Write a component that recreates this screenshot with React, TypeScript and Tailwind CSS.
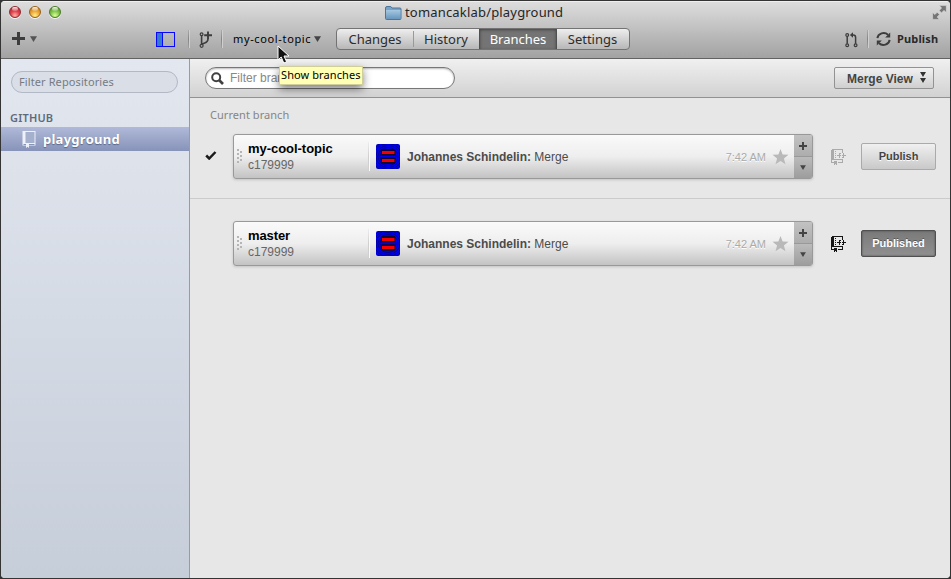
import React from "react";

const lucida = "font-['Noto_Sans','Open_Sans',sans-serif]";
const helv = "font-['Liberation_Sans',Arial,sans-serif]";

function Light({ color }: { color: "red" | "amber" | "green" }) {
  const bg = {
    red: "bg-[radial-gradient(circle_at_50%_85%,#ffb0a8_0%,#e0434b_45%,#a3202c_100%)] border-[#8c2a33]",
    amber: "bg-[radial-gradient(circle_at_50%_85%,#fff08a_0%,#eda637_45%,#b06a10_100%)] border-[#96611b]",
    green: "bg-[radial-gradient(circle_at_50%_85%,#d9ff9a_0%,#83c64a_45%,#417f1c_100%)] border-[#4a7a2b]",
  }[color];
  return (
    <div className={`relative h-3 w-3 rounded-full border shadow-[0_1px_0_#f5f5f5] ${bg}`}>
      <div className="absolute left-[2px] top-0 h-[4px] w-[6px] rounded-full bg-gradient-to-b from-white/90 to-white/20" />
    </div>
  );
}

function Divider() {
  return (
    <div className="flex h-[18px] w-[2px]">
      <div className="w-px bg-gradient-to-b from-[#aaa] via-[#858585] to-[#a0a0a0]" />
      <div className="w-px bg-[#cfcfcf]" />
    </div>
  );
}

function Triangle({ className = "" }: { className?: string }) {
  return (
    <svg className={className} width="7" height="6" viewBox="0 0 7 6">
      <path d="M0 .3h7L3.5 6z" fill="currentColor" />
    </svg>
  );
}

function BranchIcon() {
  return (
    <svg width="14" height="18" viewBox="0 0 14 18" fill="none" stroke="#3d3d3d" strokeWidth="1.6">
      <circle cx="2.6" cy="3.2" r="1.4" strokeWidth="1.2" />
      <circle cx="2.6" cy="14.8" r="1.5" strokeWidth="1.2" />
      <path d="M2.6 4.8v8.4M3.4 13.4c1-2.2 5.6-.8 5.6-5.4" />
      <path d="M9 .5v7.6M5.2 4.3h7.8" strokeWidth="1.9" />
    </svg>
  );
}

function PullIcon() {
  return (
    <svg width="13" height="16" viewBox="0 0 13 16" fill="none" stroke="#3d3d3d" strokeWidth="1.5">
      <circle cx="2.2" cy="3" r="1.4" strokeWidth="1.2" />
      <circle cx="2.2" cy="13.3" r="1.4" strokeWidth="1.2" />
      <circle cx="10.6" cy="13.3" r="1.4" strokeWidth="1.2" />
      <path d="M2.2 4.5v7.2M10.6 11.8V5.3c0-1.5-.8-2.3-2.3-2.3H7" />
      <path d="M8 .2v5.6L4.9 3z" fill="#3d3d3d" stroke="none" />
    </svg>
  );
}

function SyncIcon() {
  return (
    <svg width="15" height="16" viewBox="0 0 15 16" fill="none" stroke="#3d3d3d" strokeWidth="2">
      <path d="M1.4 7.2C2 2.4 8.3.3 12 3.7M13.6 8.8c-.6 4.8-6.9 6.900-10.6 3.500" />
      <path d="M14.2 1.400v5H9.200zM.8 14.600v-5h5z" fill="#3d3d3d" stroke="none" />
    </svg>
  );
}

function FolderIcon() {
  return (
    <svg width="17" height="14" viewBox="0 0 17 14">
      <defs>
        <linearGradient id="folder" x1="0" y1="0" x2="0" y2="1">
          <stop offset="0" stopColor="#a6c8e2" />
          <stop offset="1" stopColor="#6796bd" />
        </linearGradient>
      </defs>
      <path d="M.5 12.5V2Q.5.5 2 .5h3.8L7 2h8q1 0 1 1v9.500q0 1-1 1H1.500q-1 0-1-1z" fill="#76a3c8" stroke="#4e7496" />
      <path d="M1 4h14.500v9H1z" fill="url(#folder)" />
    </svg>
  );
}

function ExpandIcon() {
  return (
    <svg width="15" height="15" viewBox="0 0 15 15" fill="#757575">
      <path d="M7.300.6h7v7l-2.300-2.200-2.500 2.400-2.300-2.300 2.400-2.500zM.6 14.400v-7l2.300 2.200 2.300-2.300 2.300 2.300-2.400 2.500 2.500 2.300z" stroke="#dadada" strokeWidth=".6" />
    </svg>
  );
}

function RepoIcon() {
  return (
    <svg width="14" height="17" viewBox="0 0 14 17">
      <path d="M.5 0h13v14.500H7V17l-1.500-1.300L4 17v-2.500H.5z" fill="#eef1f8" />
      <path d="M3.500 1h9v11h-9z" fill="#a5b0ce" />
      <path d="M1.500 13.500H4M7 13.500h5.500" stroke="#8792b7" />
    </svg>
  );
}

function BookSyncIcon({ color }: { color: string }) {
  return (
    <svg width="15" height="17" viewBox="0 0 15 17" fill={color} shapeRendering="crispEdges">
      <path d="M0 1h1V0h11v4h-1V1H3v10H1v2h2v1H0zM3 10h9v4H7v-1h4v-2H3z" />
      <path d="M4 2h1v1H4zM4 4h1v1H4zM4 6h1v1H4zM4 8h1v1H4z" />
      <path d="M3 12h3v4H5v-1H4v1H3z" />
      <path d="M8 4h2v1H9v1h1v1H9v2H8V7H6V6h2zM12 4h1v2h2v1h-2v2h-2V8h1V7h-1V6h1z" />
    </svg>
  );
}

function Avatar() {
  return (
    <svg width="24" height="25" viewBox="0 0 24 25">
      <defs>
        <clipPath id="face"><rect width="24" height="25" rx="2" /></clipPath>
      </defs>
      <g clipPath="url(#face)">
        <rect width="24" height="25" fill="#0000f4" />
        {[7, 9, 11, 13, 15].map((r) => (
          <ellipse key={r} cx="12" cy="12.5" rx={r + 1} ry={r} fill="none" stroke="#000070" strokeWidth=".7" />
        ))}
        <rect x="4.800" y="5" width="14.400" height="6.500" rx="1" fill="#120030" />
        <rect x="4.800" y="13.300" width="14.400" height="6.400" rx="1" fill="#120030" />
        <rect x="6" y="7" width="12.500" height="3" fill="#f40000" />
        <rect x="6" y="15" width="12.500" height="3" fill="#f40000" />
      </g>
    </svg>
  );
}

function Grip() {
  return (
    <svg width="6" height="15" viewBox="0 0 6 15" fill="#b5b5b5" shapeRendering="crispEdges">
      {[0, 4, 8, 12].map((y) => <rect key={y} x="0" y={y} width="2" height="2" />)}
      {[2, 6, 10].map((y) => <rect key={y} x="3" y={y} width="2" height="2" />)}
    </svg>
  );
}

function BranchRow({ name, current, published }: { name: string; current?: boolean; published?: boolean }) {
  return (
    <div className="flex h-[45px] items-center">
      <div className="w-[43px] pb-[3px] pl-[15px]">
        {current && (
          <svg width="12" height="9" viewBox="0 0 12 9" fill="none">
            <path d="M1.200 4.500l3 3L10.500 1" stroke="#1b1b1b" strokeWidth="2.500" />
          </svg>
        )}
      </div>
      <div className={`flex h-[45px] w-[580px] overflow-hidden rounded-[3px] border border-[#999] bg-gradient-to-b from-[#fafafa] via-[#eee] to-[#c3c3c3] shadow-[0_1px_3px_rgba(0,0,0,.16)] ${helv}`}>
        <div className="flex w-[134px] items-center">
          <div className="w-[14px] pl-[3px]"><Grip /></div>
          <div className="pt-[1px]">
            <div className={`h-4 text-[13px] font-bold leading-4 text-black ${current ? "tracking-[-0.04px]" : "tracking-[-0.1px]"}`}>{name}</div>
            <div className="h-4 text-[12px] leading-4 text-[#666]">c179999</div>
          </div>
        </div>
        <div className="my-[7px] flex w-[2px]">
          <div className="w-px bg-gradient-to-b from-[#ededed] via-[#cfcfcf] to-[#d0d0d0]" />
          <div className="w-px bg-[#fafafa]" />
        </div>
        <div className="flex flex-1 items-center pl-[6px]">
          <Avatar />
          <div className="ml-[7px] whitespace-nowrap text-[12px] text-[#4b4b4b]">
            <b>Johannes Schindelin:</b> Merge
          </div>
          <div className="ml-auto mr-[6px] pt-px text-[11px] text-[#aaa] [text-shadow:0_1px_0_white]">7:42 AM</div>
          <svg className="mr-[5px]" width="17" height="16" viewBox="0 0 17 16">
            <path d="M8.500 0l2.100 5.500 5.900.3-4.600 3.700 1.600 5.800-5-3.300-5 3.300 1.600-5.800L.5 5.800l5.900-.3z" fill="#b9b9b9" />
          </svg>
        </div>
        <div className="flex w-[18px] flex-col bg-[#b6b6b6] text-[#444]">
          <div className="flex h-[22px] items-center justify-center border-b border-[#999] bg-gradient-to-b from-[#c2c2c2] to-[#adadad] pr-px pt-px">
            <svg width="8" height="8" viewBox="0 0 8 8"><path d="M4 0v8M0 4h8" stroke="currentColor" strokeWidth="2" /></svg>
          </div>
          <div className="flex flex-1 items-center justify-center bg-gradient-to-b from-[#bbb] to-[#9d9d9d] pr-px">
            <Triangle className="h-[5px] w-[6px]" />
          </div>
        </div>
      </div>
      <div className="ml-[18px] w-[30px] pt-px"><BookSyncIcon color={published ? "#151515" : "#aaa"} /></div>
      <button
        className={`h-[27px] w-[75px] rounded-[2px] border text-[11px] font-bold ${helv} ${
          published
            ? "border-[#505050] bg-gradient-to-b from-[#7a7a7a] to-[#909090] text-white shadow-[inset_0_0_2px_#444] [text-shadow:0_-1px_0_#555]"
            : "border-[#aaa] bg-gradient-to-b from-[#f0f0f0] to-[#c9c9c9] text-[#434343] [text-shadow:0_1px_0_white]"
        }`}
      >
        {published ? "Published" : "Publish"}
      </button>
    </div>
  );
}

export default function App() {
  return (
    <div className="h-[579px] w-[951px] bg-[#343434] p-px">
      <div className={`flex h-[577px] w-[949px] flex-col overflow-hidden rounded-[4px] bg-[#e7e7e7] ${lucida}`}>
        <header className="h-[58px] shrink-0 border-b border-t border-b-[#626262] border-t-[#efefef] bg-gradient-to-b from-[#dddddd] to-[#a2a2a2]">
          <div className="relative flex h-[22px] items-center pb-px pl-[384px]">
            <div className="absolute left-[8px] top-[4px] flex gap-[8px]">
              <Light color="red" /><Light color="amber" /><Light color="green" />
            </div>
            <FolderIcon />
            <span className="ml-[3px] pb-px text-[13px] leading-5 tracking-[0.18px] text-[#252525]">tomancaklab/playground</span>
            <div className="absolute right-[3px] top-[3px]"><ExpandIcon /></div>
          </div>
          <div className="flex h-[30px] items-center text-[#3d3d3d]">
            <svg className="-mt-px ml-[11px]" width="13" height="13" viewBox="0 0 13 13"><path d="M6.500 0v13M0 6.500h13" stroke="#3d3d3d" strokeWidth="3" /></svg>
            <Triangle className="-mt-px ml-[5px] text-[#555]" />
            <div className="ml-[119px] flex h-[15px] w-[19px] border border-[#0707ff]">
              <div className="w-[6px] border-r border-[#0707ff] bg-[#357ccc]" />
            </div>
            <div className="ml-[13px]"><Divider /></div>
            <div className="ml-[9px] pt-px"><BranchIcon /></div>
            <div className="ml-[8px]"><Divider /></div>
            <span className="ml-[10px] w-[79px] whitespace-nowrap text-[11px] tracking-[0.64px] text-black">my-cool-topic</span>
            <Triangle className="ml-[2px] text-[#444]" />
            <div className="ml-[15px] flex h-[22px] w-[294px] overflow-hidden rounded-[4px] border border-[#737373] bg-gradient-to-b from-[#eeeeee] to-[#b7b7b7] text-[13px] leading-5 text-[#2c2c2c]">
              <div className="w-[76px] text-center">Changes</div>
              <div className="my-[2px] w-px bg-[#999]" />
              <div className="w-[65px] pr-px text-center">History</div>
              <div className="w-[78px] border-x border-[#505050] bg-[#747474] text-center text-white shadow-[inset_0_1px_3px_#444]">Branches</div>
              <div className="flex-1 pr-px text-center">Settings</div>
            </div>
            <div className="ml-[215px] pt-px"><PullIcon /></div>
            <div className="ml-[9px]"><Divider /></div>
            <div className="ml-[7px]"><SyncIcon /></div>
            <span className="ml-[6px] text-[11px] font-bold tracking-[0.15px] text-[#292929]">Publish</span>
          </div>
        </header>
        <div className="flex min-h-0 flex-1">
          <aside className="w-[189px] shrink-0 border-r border-[#9b9b9b] bg-gradient-to-b from-[#e3e7ef] to-[#c6ceda]">
            <div className="ml-[10px] mt-[12px] flex h-[22px] w-[167px] items-center rounded-full border border-[#b2b8c4] bg-[#d9dee7] pl-[7px] text-[11px] tracking-[0.1px] text-[#767b84]">Filter Repositories</div>
            <div className="ml-[9px] mt-[18px] h-[14px] text-[11px] font-semibold leading-[14px] tracking-[0.2px] text-[#5d6a7e]">GITHUB</div>
            <div className="mt-[2px] flex h-[24px] items-center bg-gradient-to-b from-[#b0b9d8] to-[#8793b9] pl-[21px]">
              <RepoIcon />
              <span className="ml-[7px] pt-[2px] text-[13px] font-bold tracking-[0.26px] text-white [text-shadow:0_1px_1px_#59658a]">playground</span>
            </div>
          </aside>
          <main className="min-w-0 flex-1 bg-[#e7e7e7]">
            <div className="relative flex h-[39px] items-center border-b border-[#929292] bg-gradient-to-b from-[#f0f0f0] to-[#d2d2d2] pl-[15px] pr-[16px]">
              <div className={`flex h-[22px] w-[250px] items-center rounded-full border border-[#777] bg-white pl-[5px] text-[12px] text-[#888] shadow-[inset_0_1px_2px_#bbb] ${helv}`}>
                <svg width="13" height="13" viewBox="0 0 13 13" fill="none" stroke="#404040" strokeWidth="2"><circle cx="5.200" cy="5.200" r="4" /><path d="M8 8l4 4" strokeWidth="2.600" /></svg>
                <span className="ml-[6px]">Filter branches</span>
              </div>
              <button className={`ml-auto flex h-[22px] w-[100px] items-center rounded-[2px] border border-[#929292] bg-gradient-to-b from-[#f1f1f1] to-[#cfcfcf] pl-[12px] text-[12px] font-bold text-[#444] ${helv}`}>
                <span className="pt-px">Merge View</span>
                <svg className="ml-auto mr-[7px]" width="6" height="12" viewBox="0 0 6 12" fill="#333"><path d="M0 0h6L3 5zM0 6h6l-3 5z" /></svg>
              </button>
              <div className="absolute left-[89px] top-[7px] z-10 h-[19px] w-[84px] whitespace-nowrap border border-[#d0cf9a] bg-[#ffffb5] pl-px text-[11px] leading-[15px] tracking-[0.09px] text-black shadow-[0_4px_9px_rgba(0,0,0,.5)]">Show branches</div>
              <svg className="absolute left-[87px] top-[-14px] z-20" width="13" height="19" viewBox="0 0 13 19">
                <path d="M1 1v14l3.200-3 2.600 6 2.800-1.200L7 11h5z" fill="#111" stroke="#fff" />
              </svg>
            </div>
            <div className="h-[36px] pl-[20px] pt-[9px] text-[11px] leading-[16px] tracking-[0.05px] text-[#858585]">Current branch</div>
            <BranchRow name="my-cool-topic" current />
            <div className="mb-[22px] mt-[19px] h-px bg-[#cbcbcb]" />
            <BranchRow name="master" published />
          </main>
        </div>
      </div>
    </div>
  );
}
